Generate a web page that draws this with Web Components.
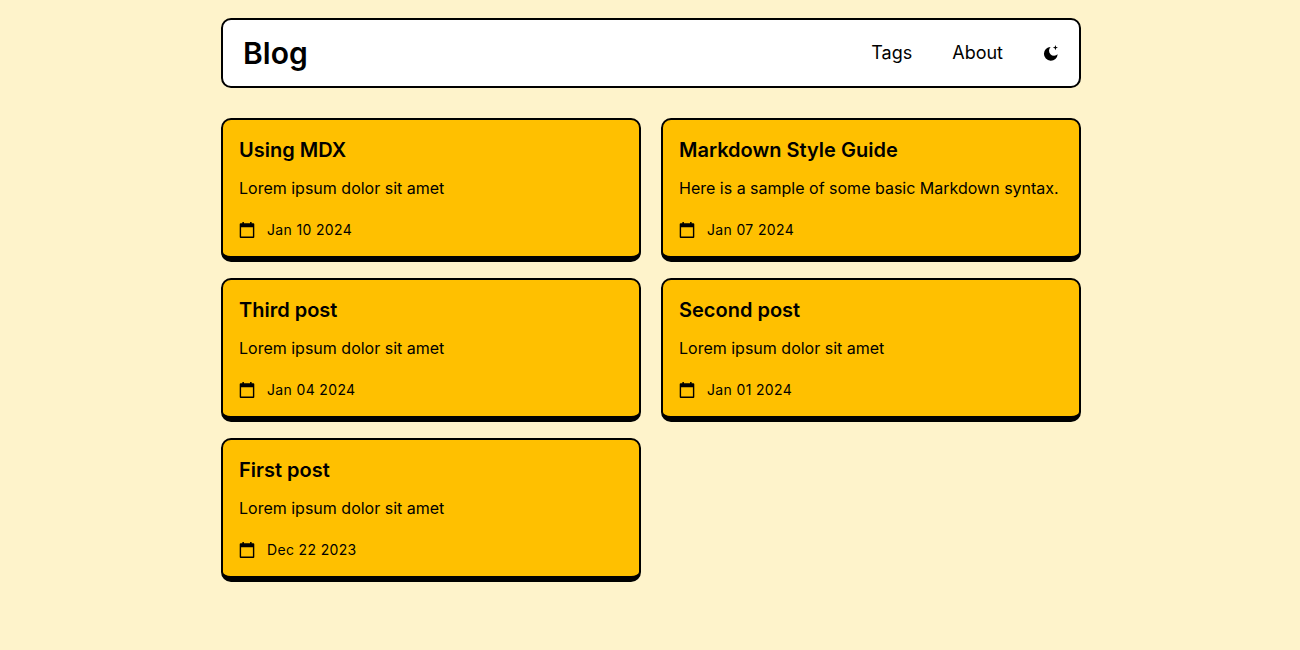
<!DOCTYPE html>
<html>
<head>
<meta charset="utf-8">
<style>
  html, body { margin: 0; background: #fef3cb; }
  body { font-family: Inter, sans-serif; color: #000; padding-left: 2px; }
</style>
</head>
<body>
<blog-page>
  <blog-header></blog-header>
  <post-card title="Using MDX" desc="Lorem ipsum dolor sit amet" date="Jan 10 2024"></post-card>
  <post-card title="Markdown Style Guide" desc="Here is a sample of some basic Markdown syntax." date="Jan 07 2024"></post-card>
  <post-card title="Third post" desc="Lorem ipsum dolor sit amet" date="Jan 04 2024"></post-card>
  <post-card title="Second post" desc="Lorem ipsum dolor sit amet" date="Jan 01 2024"></post-card>
  <post-card title="First post" desc="Lorem ipsum dolor sit amet" date="Dec 22 2023"></post-card>
</blog-page>
<script>
class BlogPage extends HTMLElement {
  constructor() {
    super();
    this.attachShadow({ mode: "open" });
    this.shadowRoot.innerHTML = `
      <style>
        :host { display: block; width: 860px; margin: 0 auto; padding-top: 18px; }
        .grid { display: grid; grid-template-columns: 420px 420px; gap: 16px 20px; margin-top: 30px; }
      </style>
      <slot name="head"></slot>
      <div class="grid"><slot></slot></div>
    `;
  }
  connectedCallback() {
    const head = this.querySelector("blog-header");
    if (head) head.setAttribute("slot", "head");
  }
}

class BlogHeader extends HTMLElement {
  constructor() {
    super();
    this.attachShadow({ mode: "open" });
    this.shadowRoot.innerHTML = `
      <style>
        :host { display: flex; box-sizing: border-box; height: 70px; align-items: center; background: #fff;
                border: 2px solid #000; border-radius: 10px; padding: 0 20px; }
        .logo { font-size: 30px; font-weight: 600; line-height: 36px; flex: 1; }
        nav { display: flex; align-items: center; gap: 40px; font-size: 18px; line-height: 28px; }
        svg { display: block; width: 16px; height: 16px; }
      </style>
      <div class="logo">Blog</div>
      <nav>
        <span>Tags</span>
        <span>About</span>
        <svg viewBox="0 0 16 16" aria-hidden="true">
          <path d="M7.600 1.900A6.900 6.900 0 1 0 14.700 9.300 4.600 4.600 0 0 1 7.600 1.900Z" fill="#000"/>
          <path d="M12.400 0L13.100 1.900 15 2.600 13.100 3.300 12.400 5.200 11.700 3.300 9.800 2.600 11.700 1.900Z" fill="#000"/>
        </svg>
      </nav>
    `;
  }
}

class PostCard extends HTMLElement {
  constructor() {
    super();
    this.attachShadow({ mode: "open" });
  }
  connectedCallback() {
    this.shadowRoot.innerHTML = `
      <style>
        :host { display: block; box-sizing: border-box; height: 144px; background: #ffc000;
                border: 2px solid #000; border-bottom-width: 6px; border-radius: 10px; padding: 16px; }
        h2 { margin: 0; font-size: 20px; font-weight: 600; line-height: 28px; }
        p { margin: 12px 0 0; font-size: 16px; line-height: 24px; }
        .date { display: flex; align-items: center; gap: 12px; margin-top: 20px; font-size: 14px; line-height: 20px; letter-spacing: .35px; }
        svg { display: block; width: 16px; height: 16px; }
      </style>
      <h2>${this.getAttribute("title")}</h2>
      <p>${this.getAttribute("desc")}</p>
      <div class="date">
        <svg viewBox="0 0 16 16" aria-hidden="true">
          <path d="M1.700 1.300H14.300Q15.300 1.300 15.300 2.300V15Q15.300 16 14.300 16H1.700Q.7 16 .7 15V2.300Q.7 1.300 1.700 1.300ZM2.100 5.300V14.600H13.900V5.300Z" fill="#000" fill-rule="evenodd"/>
          <path d="M3.400 0H4.900V2H3.400ZM11.100 0H12.600V2H11.100Z" fill="#000"/>
        </svg>
        <span>${this.getAttribute("date")}</span>
      </div>
    `;
  }
}

customElements.define("blog-page", BlogPage);
customElements.define("blog-header", BlogHeader);
customElements.define("post-card", PostCard);
</script>
</body>
</html>
